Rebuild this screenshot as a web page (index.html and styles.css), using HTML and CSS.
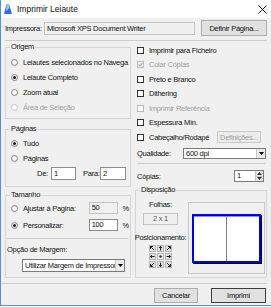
FILE: index.html
```html
<!DOCTYPE html>
<html lang="pt">
<head>
  <meta charset="UTF-8">
  <meta name="viewport" content="width=device-width, initial-scale=1.0">
  <title>Imprimir Leiaute</title>
  <link rel="stylesheet" href="styles.css">
</head>
<body>

  <div class="dialog">
    <div class="titlebar">
      <svg class="app-icon" width="10" height="12" viewBox="0 0 10 12">
        <path d="M1 11 L3.5 1 L6 1 L9 11 Z" fill="#2f6fd0"/>
        <path d="M3.5 1 L6 1 L6.5 5 L3 8 Z" fill="#9cc3f2"/>
      </svg>
      <span class="title">Imprimir Leiaute</span>
      <svg class="close" width="9" height="9" viewBox="0 0 9 9">
        <path d="M0.5 0.5 L8.5 8.5 M8.5 0.5 L0.5 8.5" stroke="#111" stroke-width="1"/>
      </svg>
    </div>

    <div class="content">
      <div class="printer-row">
        <span class="printer-label">Impressora:</span>
        <div class="field readonly printer-name">Microsoft XPS Document Writer</div>
        <button class="btn btn-setup">Definir Página...</button>
      </div>

      <div class="sep"></div>

      <div class="columns">
        <div class="col-left">
          <fieldset class="group group-origem">
            <legend>Origem</legend>
            <div class="opt"><span class="radio"></span><span class="opt-text">Leiautes selecionados no Navega</span></div>
            <div class="opt"><span class="radio checked"></span><span class="opt-text">Leiaute Completo</span></div>
            <div class="opt"><span class="radio"></span><span class="opt-text">Zoom atual</span></div>
            <div class="opt disabled"><span class="radio"></span><span class="opt-text">Área de Seleção</span></div>
          </fieldset>

          <fieldset class="group group-paginas">
            <legend>Páginas</legend>
            <div class="opt"><span class="radio checked"></span><span class="opt-text">Tudo</span></div>
            <div class="opt"><span class="radio"></span><span class="opt-text">Páginas</span></div>
            <div class="range-row">
              <span class="range-label de">De:</span>
              <div class="field range-from">1</div>
              <span class="range-label para">Para:</span>
              <div class="field range-to">2</div>
            </div>
          </fieldset>

          <fieldset class="group group-tamanho">
            <legend>Tamanho</legend>
            <div class="size-row">
              <span class="radio"></span>
              <span class="size-label">Ajustar à Pagina:</span>
              <div class="field readonly size-field">50</div>
              <span class="pct">%</span>
            </div>
            <div class="size-row">
              <span class="radio checked"></span>
              <span class="size-label">Personalizar:</span>
              <div class="field size-field">100</div>
              <span class="pct">%</span>
            </div>
            <div class="sep inner"></div>
            <div class="margin-label">Opção de Margem:</div>
            <div class="select margin-select">
              <span class="select-text">Utilizar Margem de Impressor</span>
              <span class="select-arrow"><svg width="5" height="3" viewBox="0 0 5 3"><path d="M0 0 L5 0 L2.5 3 Z" fill="#000"/></svg></span>
            </div>
          </fieldset>
        </div>

        <div class="col-right">
          <div class="check-opt"><span class="check"></span>Imprimir para Ficheiro</div>
          <div class="check-opt disabled"><span class="check checked"><svg width="5" height="5" viewBox="0 0 5 5"><path d="M0.5 2.5 L2 4 L4.5 0.8" stroke="#a0a0a0" stroke-width="1.1" fill="none"/></svg></span>Colar Cópias</div>
          <div class="check-opt"><span class="check"></span>Preto e Branco</div>
          <div class="check-opt"><span class="check"></span>Dithering</div>
          <div class="check-opt disabled"><span class="check"></span>Imprimir Referência</div>
          <div class="check-opt"><span class="check"></span>Espessura Mín.</div>
          <div class="check-opt"><span class="check"></span>Cabeçalho/Rodapé<button class="btn btn-defs">Definições...</button></div>

          <div class="quality-row">
            <span>Qualidade:</span>
            <div class="select quality-select">
              <span class="select-text">600 dpi</span>
              <span class="select-arrow"><svg width="5" height="3" viewBox="0 0 5 3"><path d="M0 0 L5 0 L2.5 3 Z" fill="#000"/></svg></span>
            </div>
          </div>

          <div class="sep right"></div>

          <div class="copies-row">
            <span>Cópias:</span>
            <div class="spin">
              <span class="spin-value">1</span>
              <span class="spin-buttons">
                <span class="spin-btn"><svg width="5" height="3" viewBox="0 0 5 3"><path d="M0 3 L5 3 L2.5 0 Z" fill="#333"/></svg></span>
                <span class="spin-btn"><svg width="5" height="3" viewBox="0 0 5 3"><path d="M0 0 L5 0 L2.5 3 Z" fill="#333"/></svg></span>
              </span>
            </div>
          </div>

          <fieldset class="group group-disp">
            <legend>Disposição</legend>
            <div class="disp-body">
              <div class="disp-left">
                <div class="sheets-label">Folhas:</div>
                <div class="sheets-box">2 x 1</div>
                <div class="pos-label">Posicionamento:</div>
                <div class="pos-grid">
                  <span class="cell"><svg width="5" height="5" viewBox="0 0 5 5"><path d="M0.5 0.5 L4 4 M0.5 0.5 L3 0.5 M0.5 0.5 L0.5 3" stroke="#222" stroke-width="1" fill="none"/></svg></span>
                  <span class="cell"><svg width="5" height="5" viewBox="0 0 5 5"><path d="M2.5 0.5 L2.5 4.5 M1 2 L2.5 0.5 L4 2" stroke="#222" stroke-width="1" fill="none"/></svg></span>
                  <span class="cell"><svg width="5" height="5" viewBox="0 0 5 5"><path d="M4.5 0.5 L1 4 M4.5 0.5 L2 0.5 M4.5 0.5 L4.5 3" stroke="#222" stroke-width="1" fill="none"/></svg></span>
                  <span class="cell"><svg width="5" height="5" viewBox="0 0 5 5"><path d="M0.5 2.5 L4.5 2.5 M2 1 L0.5 2.5 L2 4" stroke="#222" stroke-width="1" fill="none"/></svg></span>
                  <span class="cell center"><svg width="5" height="5" viewBox="0 0 5 5"><circle cx="2.5" cy="2.5" r="1.2" fill="#222"/></svg></span>
                  <span class="cell"><svg width="5" height="5" viewBox="0 0 5 5"><path d="M0.5 2.5 L4.5 2.5 M3 1 L4.5 2.5 L3 4" stroke="#222" stroke-width="1" fill="none"/></svg></span>
                  <span class="cell"><svg width="5" height="5" viewBox="0 0 5 5"><path d="M0.5 4.5 L4 1 M0.5 4.5 L3 4.5 M0.5 4.5 L0.5 2" stroke="#222" stroke-width="1" fill="none"/></svg></span>
                  <span class="cell"><svg width="5" height="5" viewBox="0 0 5 5"><path d="M2.5 0.5 L2.5 4.5 M1 3 L2.5 4.5 L4 3" stroke="#222" stroke-width="1" fill="none"/></svg></span>
                  <span class="cell"><svg width="5" height="5" viewBox="0 0 5 5"><path d="M4.5 4.5 L1 1 M4.5 4.5 L2 4.5 M4.5 4.5 L4.5 2" stroke="#222" stroke-width="1" fill="none"/></svg></span>
                </div>
              </div>
              <div class="preview">
                <div class="page">
                  <div class="page-half"></div>
                  <div class="page-half"></div>
                </div>
              </div>
            </div>
          </fieldset>
        </div>
      </div>

      <div class="sep bottom"></div>

      <div class="actions">
        <button class="btn btn-cancel">Cancelar</button>
        <button class="btn btn-default">Imprimi</button>
      </div>
    </div>
  </div>

</body>
</html>
```

FILE: styles.css
```css
* {
  box-sizing: border-box;
}

body {
  margin: 0;
  background: #ffffff;
  font-family: "Liberation Sans", Arial, sans-serif;
  font-size: 7.5px;
  letter-spacing: -0.25px;
  color: #111;
}

.dialog {
  width: 271px;
  height: 306px;
  border-left: 1px solid #4d92dc;
  border-bottom: 1px solid #4d92dc;
  background: #f0f0f0;
  display: flex;
  flex-direction: column;
}

.titlebar {
  height: 18px;
  flex: none;
  background: #ffffff;
  display: flex;
  align-items: center;
  padding: 0 4px 0 2px;
}

.app-icon {
  margin-right: 4px;
}

.title {
  flex: 1;
  font-size: 8.5px;
  letter-spacing: 0;
}

.content {
  flex: 1;
  padding: 0 4px;
  display: flex;
  flex-direction: column;
}

.printer-row {
  margin-top: 2px;
  height: 16px;
  display: flex;
  align-items: center;
}

.printer-label {
  width: 39px;
}

.printer-name {
  width: 151px;
}

.field {
  height: 13px;
  line-height: 11px;
  padding-left: 2px;
  background: #ffffff;
  border: 1px solid #8c8c8c;
  white-space: nowrap;
  overflow: hidden;
}

.field.readonly {
  background: #f0f0f0;
  border-color: #c4c4c4;
}

.btn {
  font-family: inherit;
  font-size: 7.5px;
  letter-spacing: inherit;
  color: #111;
  background: #e1e1e1;
  border: 1px solid #adadad;
  padding: 0;
  margin: 0;
  white-space: nowrap;
}

.btn-setup {
  margin-left: auto;
  width: 66px;
  height: 16px;
}

.sep {
  flex: none;
  height: 1px;
  background: #cdcdcd;
  margin-top: 4px;
}

.columns {
  display: flex;
  gap: 4px;
  align-items: flex-start;
}

.col-left {
  width: 126px;
  display: flex;
  flex-direction: column;
}

.col-right {
  width: 132px;
  display: flex;
  flex-direction: column;
  padding-top: 2px;
}

.group {
  margin: 0;
  padding: 0 1px 3px;
  border: 1px solid #d5d5d5;
  min-width: 0;
}

.group legend {
  padding: 0 1px;
  margin-left: 3px;
  height: 10px;
  line-height: 10px;
}

.group-origem {
  margin-top: 1px;
  padding-top: 3px;
}

.opt {
  height: 15px;
  display: flex;
  align-items: center;
  padding-left: 4px;
  white-space: nowrap;
  overflow: hidden;
}

.opt.disabled {
  color: #a0a0a0;
}

.radio {
  position: relative;
  flex: none;
  width: 7px;
  height: 7px;
  margin-right: 5px;
  border-radius: 50%;
  border: 1px solid #808080;
  background: #ffffff;
}

.radio.checked::after {
  content: "";
  position: absolute;
  left: 1px;
  top: 1px;
  width: 3px;
  height: 3px;
  border-radius: 50%;
  background: #111;
}

.opt.disabled .radio {
  border-color: #c4c4c4;
}

.group-paginas {
  margin-top: 5px;
  padding-top: 2px;
  padding-bottom: 6px;
}

.range-row {
  height: 13px;
  margin-top: 1px;
  display: flex;
  align-items: center;
  padding-left: 30px;
}

.range-label.de {
  width: 14px;
}

.range-label.para {
  width: 17px;
  margin-left: 7px;
}

.range-from {
  width: 25px;
}

.range-to {
  width: 26px;
}

.group-tamanho {
  margin-top: 3px;
  padding-top: 2px;
  padding-bottom: 5px;
}

.size-row {
  height: 12px;
  display: flex;
  align-items: center;
  padding-left: 4px;
}

.size-row + .size-row {
  margin-top: 5px;
}

.size-label {
  width: 66px;
  white-space: nowrap;
}

.size-field {
  width: 29px;
  height: 12px;
  line-height: 10px;
}

.pct {
  margin-left: 5px;
}

.sep.inner {
  margin: 7px 1px 0 0;
}

.margin-label {
  margin-top: 5px;
  height: 12px;
  line-height: 12px;
}

.select {
  display: flex;
  align-items: stretch;
  background: #ffffff;
  border: 1px solid #7a7a7a;
}

.select-text {
  flex: 1;
  padding-left: 2px;
  white-space: nowrap;
  overflow: hidden;
  line-height: 11px;
}

.select-arrow {
  flex: none;
  width: 9px;
  display: flex;
  align-items: center;
  justify-content: center;
  background: #eaeaea;
  border-left: 1px solid #c8c8c8;
}

.margin-select {
  margin: 3px 0 0 15px;
  width: 103px;
  height: 13px;
}

.check-opt {
  height: 14.5px;
  display: flex;
  align-items: center;
  padding-left: 2px;
  white-space: nowrap;
}

.check-opt.disabled {
  color: #a0a0a0;
}

.check {
  flex: none;
  width: 7px;
  height: 7px;
  margin-right: 5px;
  border: 1px solid #333;
  background: #ffffff;
  display: flex;
  align-items: center;
  justify-content: center;
}

.check-opt.disabled .check {
  border-color: #bcbcbc;
}

.btn-defs {
  margin-left: auto;
  margin-right: 6px;
  width: 44px;
  height: 12px;
  color: #a0a0a0;
  background: #ececec;
  border-color: #c8c8c8;
}

.quality-row {
  margin-top: 3.5px;
  height: 11px;
  display: flex;
  align-items: center;
  padding-left: 2px;
}

.quality-select {
  margin-left: auto;
  margin-right: 1px;
  width: 83px;
  height: 11px;
}

.quality-select .select-text {
  line-height: 9px;
}

.sep.right {
  margin: 4px 1px 0 2px;
}

.copies-row {
  margin-top: 6px;
  height: 12px;
  display: flex;
  align-items: center;
  padding-left: 2px;
}

.spin {
  margin-left: auto;
  margin-right: 3px;
  width: 30px;
  height: 12px;
  display: flex;
  background: #ffffff;
  border: 1px solid #7a7a7a;
}

.spin-value {
  flex: 1;
  padding-left: 2px;
  line-height: 10px;
}

.spin-buttons {
  width: 8px;
  display: flex;
  flex-direction: column;
}

.spin-btn {
  flex: 1;
  display: flex;
  align-items: center;
  justify-content: center;
  background: #e6e6e6;
  border-left: 1px solid #c8c8c8;
}

.spin-btn + .spin-btn {
  border-top: 1px solid #c8c8c8;
}

.group-disp {
  margin-top: 3px;
  padding: 0 1px 3px 0;
}

.group-disp legend {
  margin-left: 4px;
}

.disp-body {
  display: flex;
  padding-top: 5px;
}

.disp-left {
  width: 52px;
  display: flex;
  flex-direction: column;
  align-items: center;
  padding-right: 3px;
  white-space: nowrap;
}

.sheets-label {
  height: 10px;
  line-height: 10px;
}

.sheets-box {
  margin-top: 3px;
  width: 35px;
  height: 12px;
  line-height: 10px;
  text-align: center;
  color: #555;
  background: #f0f0f0;
  border: 1px solid #c4c4c4;
}

.pos-label {
  margin-top: 8px;
  height: 10px;
  line-height: 10px;
}

.pos-grid {
  margin-top: 2px;
  display: grid;
  grid-template-columns: repeat(3, 7px);
  grid-auto-rows: 7px;
  gap: 1px;
}

.cell {
  display: flex;
  align-items: center;
  justify-content: center;
  background: #e1e1e1;
  border: 1px solid #b4b4b4;
}

.cell.center {
  background: #f6f6f6;
}

.preview {
  margin-top: 2px;
  width: 77px;
  height: 72px;
  border: 1px solid #c8c8c8;
  display: flex;
  align-items: center;
  justify-content: center;
}

.page {
  width: 69px;
  height: 49px;
  display: flex;
  background: #ffffff;
  border: 2px solid #0000e6;
  box-shadow: 1px 1px 0 #000, inset 0 1px 0 #8c8cff;
}

.page-half {
  flex: 1;
}

.page-half + .page-half {
  border-left: 1px solid #808080;
}

.sep.bottom {
  margin: 5px 0 0 -4px;
}

.actions {
  margin-top: 4px;
  display: flex;
  justify-content: flex-end;
  gap: 13px;
  padding-right: 1px;
}

.actions .btn {
  height: 15px;
}

.btn-cancel {
  width: 44px;
}

.btn-default {
  width: 55px;
  border-color: #3c3c3c;
}
```
